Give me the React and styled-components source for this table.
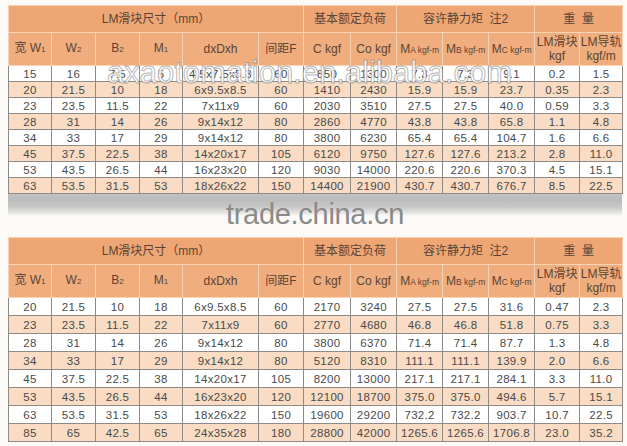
import React from "react";
import styled, { createGlobalStyle } from "styled-components";

const Global = createGlobalStyle`
  html, body { margin: 0; padding: 0; background: #fbfaf7; }
  body { font-family: "Liberation Sans", Arial, "Noto Sans CJK SC", sans-serif; }
`;

const Page = styled.div`
  width: 627px;
  height: 446px;
  overflow: hidden;
  padding: 5px 5px 0 8px;
  box-sizing: border-box;
  display: flex;
  flex-direction: column;
`;

const TableWrap = styled.div`
  position: relative;
  width: 614px;
`;

const Table = styled.table`
  width: 614px;
  table-layout: fixed;
  border-collapse: collapse;
  font-family: "Liberation Sans", Arial, "Noto Sans CJK SC", sans-serif;
`;

const HeadCell = styled.th`
  background: ${(p) => (p.$top ? "#eea675" : "#f0ad7e")};
  color: #5a4535;
  font-weight: normal;
  font-size: 12px;
  line-height: 14px;
  height: ${(p) => p.$h}px;
  padding: 0;
  border: 1px solid #f6d2b6;
  text-align: center;
  vertical-align: middle;
  box-sizing: border-box;
  font-family: "Liberation Sans", Arial, "Noto Sans CJK SC", sans-serif;
`;

const Sub = styled.span`
  font-size: 8px;
`;

const Small = styled.span`
  font-size: 8.5px;
`;

const Row = styled.tr`
  background: ${(p) => (p.$alt ? "#f9dcc3" : "#ffffff")};
`;

const Cell = styled.td`
  height: ${(p) => p.$h}px;
  padding: 0;
  border: 1px solid #8e8a86;
  text-align: center;
  vertical-align: middle;
  font-size: 11.5px;
  line-height: 12px;
  color: #4a4a4a;
  letter-spacing: 0.3px;
  box-sizing: border-box;
`;

const Watermark = styled.div`
  position: absolute;
  left: 99px;
  top: 52px;
  font-family: "Liberation Sans", Arial, sans-serif;
  font-size: 31px;
  line-height: 31px;
  color: rgba(255, 255, 255, 0.85);
  -webkit-text-stroke: 1px rgba(110, 110, 110, 0.5);
  white-space: nowrap;
  pointer-events: none;
`;

const Gap = styled.div`
  height: 43px;
  width: 614px;
  box-sizing: border-box;
  padding-top: 6px;
  background-image: linear-gradient(
    to bottom,
    #c2c2c2 0px,
    #bcbcbc 6px,
    #c8c8c8 13px,
    #e6e6e4 19px,
    rgba(251, 250, 247, 0) 22px
  );
  text-align: center;
`;

const Brand = styled.div`
  font-family: "Liberation Sans", Arial, sans-serif;
  font-size: 29px;
  line-height: 29px;
  color: #8a8a8a;
  letter-spacing: -0.3px;
`;

const cols = [43, 44, 44, 43, 76, 45, 47, 46, 46, 46, 46, 45, 43];

const table1 = [
  ["15", "16", "7.5", "5", "4.5x7.5x5.3", "60", "850", "1300", "7.3", "7.3", "9.1", "0.2", "1.5"],
  ["20", "21.5", "10", "18", "6x9.5x8.5", "60", "1410", "2430", "15.9", "15.9", "23.7", "0.35", "2.3"],
  ["23", "23.5", "11.5", "22", "7x11x9", "60", "2030", "3510", "27.5", "27.5", "40.0", "0.59", "3.3"],
  ["28", "31", "14", "26", "9x14x12", "80", "2860", "4770", "43.8", "43.8", "65.8", "1.1", "4.8"],
  ["34", "33", "17", "29", "9x14x12", "80", "3800", "6230", "65.4", "65.4", "104.7", "1.6", "6.6"],
  ["45", "37.5", "22.5", "38", "14x20x17", "105", "6120", "9750", "127.6", "127.6", "213.2", "2.8", "11.0"],
  ["53", "43.5", "26.5", "44", "16x23x20", "120", "9030", "14000", "220.6", "220.6", "370.3", "4.5", "15.1"],
  ["63", "53.5", "31.5", "53", "18x26x22", "150", "14400", "21900", "430.7", "430.7", "676.7", "8.5", "22.5"],
];

const table2 = [
  ["20", "21.5", "10", "18", "6x9.5x8.5", "60", "2170", "3240", "27.5", "27.5", "31.6", "0.47", "2.3"],
  ["23", "23.5", "11.5", "22", "7x11x9", "60", "2770", "4680", "46.8", "46.8", "51.8", "0.75", "3.3"],
  ["28", "31", "14", "26", "9x14x12", "80", "3800", "6370", "71.4", "71.4", "87.7", "1.3", "4.8"],
  ["34", "33", "17", "29", "9x14x12", "80", "5120", "8310", "111.1", "111.1", "139.9", "2.0", "6.6"],
  ["45", "37.5", "22.5", "38", "14x20x17", "105", "8200", "13000", "217.1", "217.1", "284.1", "3.3", "11.0"],
  ["53", "43.5", "26.5", "44", "16x23x20", "120", "12100", "18700", "375.0", "375.0", "494.6", "5.7", "15.1"],
  ["63", "53.5", "31.5", "53", "18x26x22", "150", "19600", "29200", "732.2", "732.2", "903.7", "10.7", "22.5"],
  ["85", "65", "42.5", "65", "24x35x28", "180", "28800", "42000", "1265.6", "1265.6", "1706.8", "23.0", "35.2"],
];

function SpecTable({ rows, rowH, children }) {
  return (
    <TableWrap>
      <Table>
        <colgroup>
          {cols.map((w, i) => (
            <col key={i} style={{ width: w }} />
          ))}
        </colgroup>
        <thead>
          <tr>
            <HeadCell $top $h={27} colSpan={6}>LM滑块尺寸（mm）</HeadCell>
            <HeadCell $top $h={27} colSpan={2}>基本额定负荷</HeadCell>
            <HeadCell $top $h={27} colSpan={3}>容许静力矩&nbsp; 注2</HeadCell>
            <HeadCell $top $h={27} colSpan={2}>重&nbsp;&nbsp;量</HeadCell>
          </tr>
          <tr>
            <HeadCell $h={33}>宽 W<Sub>1</Sub></HeadCell>
            <HeadCell $h={33}>W<Sub>2</Sub></HeadCell>
            <HeadCell $h={33}>B<Sub>2</Sub></HeadCell>
            <HeadCell $h={33}>M<Sub>1</Sub></HeadCell>
            <HeadCell $h={33}>dxDxh</HeadCell>
            <HeadCell $h={33}>间距F</HeadCell>
            <HeadCell $h={33}>C kgf</HeadCell>
            <HeadCell $h={33}>Co kgf</HeadCell>
            <HeadCell $h={33}>M<Small>A kgf-m</Small></HeadCell>
            <HeadCell $h={33}>M<Small>B kgf-m</Small></HeadCell>
            <HeadCell $h={33}>M<Small>C kgf-m</Small></HeadCell>
            <HeadCell $h={33}>LM滑块<br />kgf</HeadCell>
            <HeadCell $h={33}>LM导轨<br />kgf/m</HeadCell>
          </tr>
        </thead>
        <tbody>
          {rows.map((r, i) => (
            <Row key={i} $alt={i % 2 === 1}>
              {r.map((v, j) => (
                <Cell key={j} $h={rowH}>{v}</Cell>
              ))}
            </Row>
          ))}
        </tbody>
      </Table>
      {children}
    </TableWrap>
  );
}

export default function App() {
  return (
    <>
      <Global />
      <Page>
        <SpecTable rows={table1} rowH={16}>
          <Watermark>axaotomation.en.alibaba.com</Watermark>
        </SpecTable>
        <Gap>
          <Brand>trade.china.cn</Brand>
        </Gap>
        <SpecTable rows={table2} rowH={18} />
      </Page>
    </>
  );
}
